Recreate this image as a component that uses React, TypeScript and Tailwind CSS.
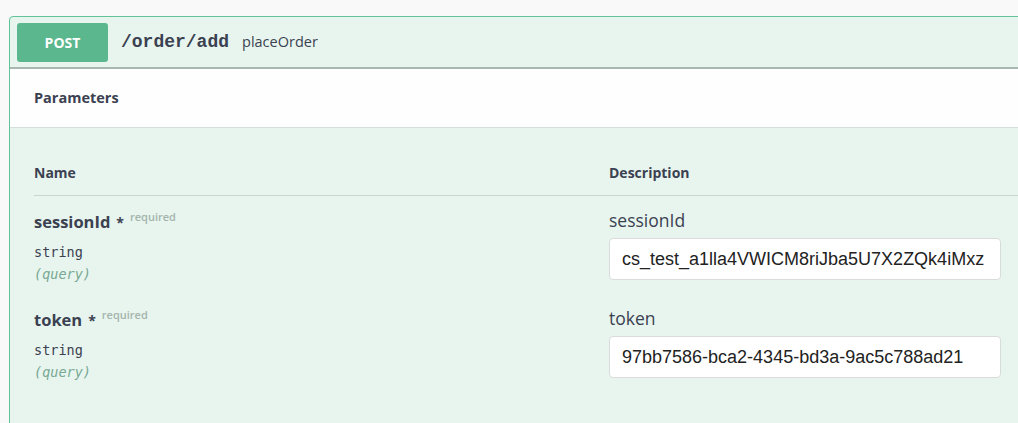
import React from "react";

const sans = "font-['Open_Sans',sans-serif]";
const mono = "font-['Liberation_Mono',monospace]";
const typeMono = "font-['DejaVu_Sans_Mono',monospace]";

function ParamRow({ name, value }: { name: string; value: string }) {
  return (
    <div className="grid grid-cols-[575px_1fr]">
      <div className="pt-[15px]">
        <div className={`flex items-start leading-[22px] text-[#3b4151] ${sans}`}>
          <span className="text-[16.5px] font-bold">{name}</span>
          <span className="ml-[6px] mt-[5px] text-[14px] font-bold leading-[14px]">*</span>
          <span className="ml-[6px] mt-[-1px] text-[11px] font-semibold leading-[14px] text-[#a5b4ad]">
            required
          </span>
        </div>
        <div className={`mt-[9px] text-[13.5px] leading-[20px] text-[#3b4151] ${typeMono}`}>string</div>
        <div className={`mt-[1px] text-[13.5px] italic leading-[22px] text-[#78a893] ${typeMono}`}>
          (query)
        </div>
      </div>
      <div className="pt-[13px]">
        <div className={`text-[17.5px] leading-[22px] text-[#3b4151] ${sans}`}>{name}</div>
        <input
          readOnly
          value={value}
          className="mt-[7px] block h-[42px] w-[392px] rounded-[4px] border border-[#d9dcda] bg-white pl-[12px] pr-[10px] text-[18px] text-[#222] outline-none font-['Liberation_Sans',Arial,sans-serif]"
        />
      </div>
    </div>
  );
}

export default function App() {
  return (
    <div className="h-[423px] w-[1018px] overflow-hidden bg-[#f8f9f8] pl-[9px] pt-[16px]">
      <div className="w-[1030px] rounded-tl-[4px] border border-[#62c398] bg-[#e7f5ee]">
        {/* summary */}
        <div className="flex h-[52px] items-center border-b-2 border-[#a8b8b0] pl-[7px]">
          <div className={`flex h-[39px] w-[91px] items-center justify-center rounded-[3px] bg-[#5bb78d] text-[14px] font-bold text-white ${sans}`}>
            POST
          </div>
          <span className={`ml-[13px] text-[18px] font-bold text-[#3b4151] ${mono}`}>/order/add</span>
          <span className={`ml-[13px] text-[14.5px] text-[#3b4151] ${sans}`}>placeOrder</span>
        </div>

        {/* section header */}
        <div className="flex h-[59px] items-center border-b border-[#d6dfda] bg-[#fdfefd] pl-[24px]">
          <h4 className={`text-[14.5px] font-bold text-[#3b4151] ${sans}`}>Parameters</h4>
        </div>

        {/* table */}
        <div className="h-[320px] pl-[24px]">
          <div className={`grid grid-cols-[575px_1fr] border-b border-[#cbd5d0] pb-[13px] pt-[36px] text-[14px] font-bold leading-[18px] text-[#3b4151] ${sans}`}>
            <div>Name</div>
            <div>Description</div>
          </div>
          <ParamRow name="sessionId" value="cs_test_a1lla4VWICM8riJba5U7X2ZQk4iMxz" />
          <div className="h-[9px]" />
          <ParamRow name="token" value="97bb7586-bca2-4345-bd3a-9ac5c788ad21" />
        </div>
      </div>
    </div>
  );
}
